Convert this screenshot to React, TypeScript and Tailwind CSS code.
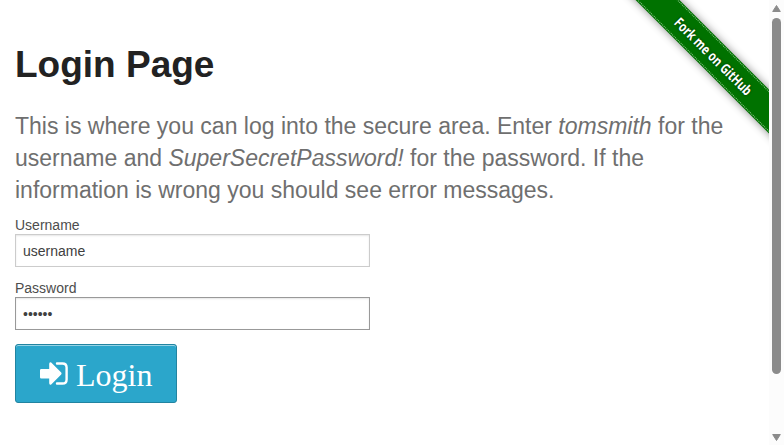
import React from 'react';

function Ribbon() {
  return (
    <div className="pointer-events-none absolute top-0 right-[15px] h-[149px] w-[149px] overflow-hidden">
      <div className="absolute top-[41px] left-[-18px] flex h-[31px] w-[224px] rotate-45 flex-col justify-between bg-[#007200] py-px shadow-[0_0_8px_rgba(0,0,0,0.45)]">
        <div className="border-t border-dotted border-[#8cc68c]" />
        <svg className="self-center" width="106" height="22" viewBox="0 0 106 22">
          <text
            x="1"
            y="16"
            textLength="103"
            lengthAdjust="spacingAndGlyphs"
            className="fill-white font-['Noto_Sans',sans-serif] text-[14px] font-bold [text-shadow:0_0_3px_rgba(0,0,0,0.6)]"
          >
            Fork me on GitHub
          </text>
        </svg>
        <div className="border-b border-dotted border-[#8cc68c]" />
      </div>
    </div>
  );
}

function Scrollbar() {
  return (
    <div className="flex h-full w-[15px] shrink-0 flex-col items-center bg-[#fcfcfc] pt-[4px] pb-[3px]">
      <svg className="h-[9px] w-[9px]" viewBox="0 0 9 9">
        <path d="M4.5 1.5 8.3 7.5H.7Z" fill="#8b8b8b" stroke="#8b8b8b" strokeLinejoin="round" />
      </svg>
      <div className="mt-[5px] h-[356px] w-[9px] rounded-full bg-[#8b8b8b]" />
      <svg className="mt-auto h-[9px] w-[9px]" viewBox="0 0 9 9">
        <path d="M.7 1.5h7.6L4.5 7.5Z" fill="#8b8b8b" stroke="#8b8b8b" strokeLinejoin="round" />
      </svg>
    </div>
  );
}

export default function App() {
  return (
    <div className="relative flex h-[445px] w-[784px] overflow-hidden bg-white font-['Liberation_Sans',Arial,sans-serif]">
      <main className="flex min-w-0 flex-1 flex-col pt-[39px] pl-[15px]">
        <h2 className="self-start text-[37px] leading-[52px] font-bold text-[#222]">Login Page</h2>
        <h4 className="mt-[19px] w-[724px] text-[23px] leading-[32.2px] text-[#6f6f6f]">
          This is where you can log into the secure area. Enter <em>tomsmith</em> for the username and{' '}
          <em>SuperSecretPassword!</em> for the password. If the information is wrong you should see error messages.
        </h4>
        <form className="mt-[8px] flex w-[355px] flex-col items-start" onSubmit={(e) => e.preventDefault()}>
          <label htmlFor="username" className="block h-[19px] text-[14px] leading-[21px] text-[#4d4d4d]">
            Username
          </label>
          <input
            id="username"
            defaultValue="username"
            className="block h-[33px] w-full border border-[#ccc] bg-white px-[7px] pt-[2px] text-[14px] text-[#404040] shadow-[inset_0_1px_2px_rgba(0,0,0,0.1)] outline-none"
          />
          <label htmlFor="password" className="mt-[11px] block h-[19px] text-[14px] leading-[21px] text-[#4d4d4d]">
            Password
          </label>
          <input
            id="password"
            type="password"
            defaultValue="secret"
            className="block h-[33px] w-full border border-[#999] bg-white px-[7px] pt-[2px] text-[14px] text-[#404040] shadow-[inset_0_1px_2px_rgba(0,0,0,0.1)] outline-none"
          />
          <button
            type="submit"
            className="mt-[14px] flex h-[59px] w-[162px] gap-2 rounded-[3px] border border-[#2284a1] bg-[#2ba6cb] pl-[24px] text-white shadow-[inset_0_1px_0_rgba(255,255,255,0.5)]"
          >
            <svg className="mt-[17px] h-[24px] w-[28px]" viewBox="0 0 28 24" fill="none">
              <path
                d="M1.2 7H9.2V2Q9.2 .2 10.3 .2Q10.8 .2 11.2 .6L21.2 10.5Q22 11.5 21.2 12.5L11.2 22.4Q10.8 22.8 10.3 22.8Q9.2 22.8 9.2 21V16.4H1.2Q0 16.4 0 15.2V8.2Q0 7 1.2 7Z"
                fill="currentColor"
              />
              <path
                d="M17 1.5H22.5Q26.6 1.5 26.6 5.6V17.4Q26.6 21.5 22.5 21.5H17"
                stroke="currentColor"
                strokeWidth="2.4"
                strokeLinecap="round"
              />
            </svg>
            <span className="pt-[12px] font-['Liberation_Serif','Times_New_Roman',serif] text-[32px] leading-[36px]">
              Login
            </span>
          </button>
        </form>
      </main>
      <Scrollbar />
      <Ribbon />
    </div>
  );
}
